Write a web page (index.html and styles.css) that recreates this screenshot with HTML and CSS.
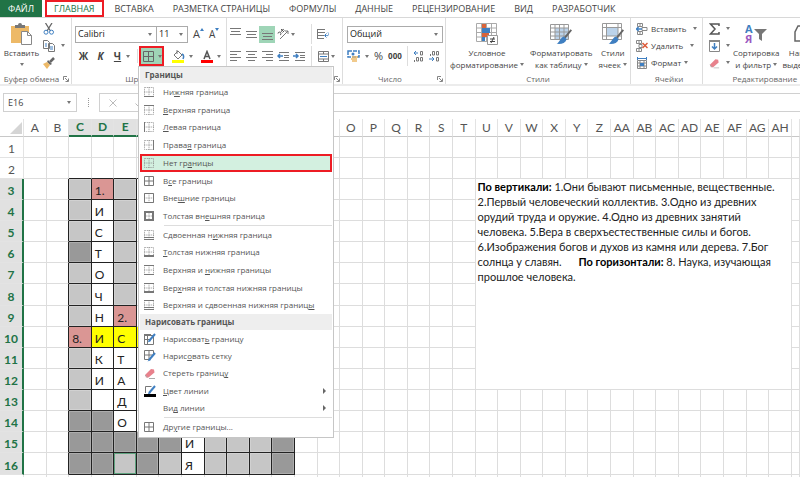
FILE: index.html
```
<!DOCTYPE html>
<html lang="ru">
<head>
<meta charset="utf-8">
<title>Кроссворд</title>
<link rel="stylesheet" href="styles.css">
</head>
<body>
<svg class="defs" aria-hidden="true">
 <symbol id="dots" viewBox="0 0 10 10">
  <path d="M.5 .5h9v9h-9zM5 0v10M0 5h10" fill="none" stroke="#8a8a8a" stroke-dasharray="1.4 .8" stroke-width=".7"/>
 </symbol>
 <symbol id="launch" viewBox="0 0 6 6">
  <path d="M.5 4V.5H4M2 2l3 3M5.500 2.500v3h-3" fill="none" stroke="#777" stroke-width=".9"/>
 </symbol>
 <symbol id="brush" viewBox="0 0 12 12">
  <path d="M11.500 1L6.500 7" stroke="#666" stroke-width="1.500"/>
  <path d="M6 6l2 2c-1 3-4 4-7.500 3.500C3 10 3 7 6 6z" fill="#3f7fc1"/>
 </symbol>
 <symbol id="eraser" viewBox="0 0 12 12">
  <path d="M1 8l6-6 3 .5.500 3-6 5H2z" fill="#e8818c" stroke="none"/>
  <path d="M1 8l2.500 2.500M5 11.500h6" stroke="#aaa" fill="none"/>
 </symbol>
 <symbol id="pen" viewBox="0 0 12 12">
  <path d="M11 1L5 8" stroke="#3f7fc1" stroke-width="2"/>
  <path d="M5.500 6.500L3.500 9.500 7 8z" fill="#3f7fc1" stroke="none"/>
 </symbol>
</svg>

<nav class="tabs">
 <a class="file" href="#">ФАЙЛ</a>
 <a class="current" href="#">ГЛАВНАЯ</a>
 <a href="#">ВСТАВКА</a>
 <a href="#">РАЗМЕТКА СТРАНИЦЫ</a>
 <a href="#">ФОРМУЛЫ</a>
 <a href="#">ДАННЫЕ</a>
 <a href="#">РЕЦЕНЗИРОВАНИЕ</a>
 <a href="#">ВИД</a>
 <a href="#">РАЗРАБОТЧИК</a>
</nav>

<div class="ribbon">
 <section class="group clipboard">
  <div class="tools">
   <button class="big">
    <svg width="22" height="22" viewBox="0 0 22 22"><path d="M0 3h18v17H0z" fill="#edb967"/><path d="M4 5V2h3a2 2 0 0 1 4 0h3v3z" fill="#777"/><path d="M10.500 8.500h6l4 4v9h-10z" fill="#fff" stroke="#888"/><path d="M16.500 8.500v4h4" fill="none" stroke="#888"/></svg>
    <span>Вставить</span>
    <i class="arrow"></i>
   </button>
   <div class="stack">
    <button title="Вырезать"><svg width="12" height="12" viewBox="0 0 12 12"><path d="M2.500 0l5 8M9 0L4 8" stroke="#666" stroke-width="1.3"/><circle cx="3" cy="9.200" r="2" fill="none" stroke="#3f7fc1"/><circle cx="8.500" cy="9.200" r="2" fill="none" stroke="#3f7fc1"/></svg></button>
    <button title="Копировать"><svg width="12" height="12" viewBox="0 0 12 12"><path d="M.5.5h4l2 2v6h-6zM5.500 3.500h4l2 2v6h-6z" fill="#fff" stroke="#777"/><path d="M2 4h2M2 6h2M7 7h3M7 9h3" stroke="#3f7fc1"/></svg><i class="arrow"></i></button>
    <button title="Формат по образцу"><svg width="12" height="12" viewBox="0 0 12 12"><path d="M11 1L7 5" stroke="#666" stroke-width="2.500"/><path d="M5 3l4 4-2 1-3-3z" fill="#666"/><path d="M4 5l3 3-3 4-4-5z" fill="#edb967"/></svg></button>
   </div>
  </div>
  <footer><span>Буфер обмена</span><svg class="launch"><use href="#launch"/></svg></footer>
 </section>

 <section class="group font">
  <div class="tools">
   <div class="line">
    <label class="select name"><select aria-label="Шрифт"><option>Calibri</option></select></label>
    <label class="select size"><select aria-label="Размер"><option>11</option></select></label>
    <button class="grow">A<svg width="4" height="3" viewBox="0 0 4 3"><path d="M0 3l2-3 2 3z" fill="#3f7fc1"/></svg></button>
    <button class="shrink">A<svg width="4" height="3" viewBox="0 0 4 3"><path d="M0 0l2 3 2-3z" fill="#3f7fc1"/></svg></button>
   </div>
   <div class="line">
    <button class="letter"><b>Ж</b></button>
    <button class="letter"><b><em>К</em></b></button>
    <button class="letter"><b><u>Ч</u></b></button>
    <i class="arrow"></i>
    <i class="rule"></i>
    <div class="dropdown">
     <button class="borders" title="Границы"><svg width="11" height="11" viewBox="0 0 11 11"><path d="M.5.5h10v10H.500zM5.500 0v11M0 5.500h11" fill="none" stroke="#666"/></svg><i class="arrow"></i></button>
     <div class="menu">
      <h2>Границы</h2>
      <ul class="edges">
       <li><button><svg><use href="#dots"/><path d="M0 9.500h10"/></svg><span>Ни<u>ж</u>няя граница</span></button></li>
       <li><button><svg><use href="#dots"/><path d="M0 .5h10"/></svg><span><u>В</u>ерхняя граница</span></button></li>
       <li><button><svg><use href="#dots"/><path d="M.5 0v10"/></svg><span><u>Л</u>евая граница</span></button></li>
       <li><button><svg><use href="#dots"/><path d="M9.500 0v10"/></svg><span>Права<u>я</u> граница</span></button></li>
       <li><button class="picked"><svg><use href="#dots"/></svg><span>Нет гр<u>а</u>ницы</span></button></li>
       <li><button><svg><path d="M.5.5h9v9h-9zM5 0v10M0 5h10"/></svg><span>В<u>с</u>е границы</span></button></li>
       <li><button><svg><use href="#dots"/><path d="M.5.5h9v9h-9z"/></svg><span>Вне<u>ш</u>ние границы</span></button></li>
       <li><button><svg><use href="#dots"/><path class="thick" d="M1 1h8v8H1z"/></svg><span>Толстая вн<u>е</u>шняя граница</span></button></li>
      </ul>
      <hr>
      <ul class="mixed">
       <li><button><svg><use href="#dots"/><path d="M0 7.500h10M0 9.500h10"/></svg><span>Сдвоенная н<u>и</u>жняя граница</span></button></li>
       <li><button><svg><use href="#dots"/><path class="thick" d="M0 9h10"/></svg><span><u>Т</u>олстая нижняя граница</span></button></li>
       <li><button><svg><use href="#dots"/><path d="M0 .5h10M0 9.500h10"/></svg><span>Верхняя и <u>н</u>ижняя границы</span></button></li>
       <li><button><svg><use href="#dots"/><path d="M0 .5h10"/><path class="thick" d="M0 9h10"/></svg><span>Вер<u>х</u>няя и толстая нижняя границы</span></button></li>
       <li><button><svg><use href="#dots"/><path d="M0 .5h10M0 7.500h10M0 9.500h10"/></svg><span>Верхняя и сдвоенная нижняя границ<u>ы</u></span></button></li>
      </ul>
      <h2>Нарисовать границы</h2>
      <ul class="draw">
       <li><button><svg class="wide" viewBox="0 0 12 12"><path d="M.5 2.500h9v9h-9zM3.500 3v8M0 6.500h6"/><path class="thick" d="M0 2h7"/><use href="#pen"/></svg><span>Нарисоват<u>ь</u> границу</span></button></li>
       <li><button><svg class="wide" viewBox="0 0 12 12"><path d="M.5.5h9v5M.5.500v9h5M5 0v9M0 5h9"/><use href="#pen" y="2"/></svg><span>Нарис<u>о</u>вать сетку</span></button></li>
       <li><button><svg class="wide" viewBox="0 0 12 12"><use href="#eraser"/></svg><span>Стереть границ<u>у</u></span></button></li>
       <li><button><svg class="wide" viewBox="0 0 12 12"><path d="M1.500 8V1.500h6"/><use href="#pen"/><path d="M0 10.500h12" class="ink"/></svg><span><u>Ц</u>вет линии</span><i class="more"></i></button></li>
       <li><button><svg></svg><span>Ви<u>д</u> линии</span><i class="more"></i></button></li>
      </ul>
      <hr>
      <ul class="other">
       <li><button><svg><path d="M.5.5h9v9h-9zM5 0v10M0 5h10"/></svg><span>Др<u>у</u>гие границы...</span></button></li>
      </ul>
     </div>
    </div>
    <button class="fill" title="Цвет заливки"><svg width="13" height="13" viewBox="0 0 13 13"><path d="M2 5l4-4 4 4-4 4z" fill="#fff" stroke="#777"/><path d="M5 0v4" stroke="#777"/><path d="M10 4c2 1 2 3 1 5" fill="none" stroke="#3f7fc1" stroke-width="1.500"/><path d="M0 10h12v3H0z" fill="#ff0"/></svg></button>
    <i class="arrow"></i>
    <button class="fill" title="Цвет текста"><svg width="12" height="13" viewBox="0 0 12 13"><path d="M3 9l3-7.500L9 9M4 6.500h4" fill="none" stroke="#555" stroke-width="1.500"/><path d="M0 10h12v3H0z" fill="red"/></svg></button>
    <i class="arrow"></i>
   </div>
  </div>
  <footer><span>Шрифт</span></footer>
 </section>

 <section class="group align">
  <div class="tools">
   <div class="line">
    <button><svg width="11" height="12" viewBox="0 0 11 12"><path d="M0 .5h11M1 3.500h9M0 6.500h11"/></svg></button>
    <button><svg width="11" height="12" viewBox="0 0 11 12"><path d="M0 3.500h11M1 6.500h9M0 9.500h11"/></svg></button>
    <button class="on"><svg width="11" height="12" viewBox="0 0 11 12"><path d="M0 5.500h11M1 8.500h9M0 11.500h11"/></svg></button>
    <button><svg width="12" height="12" viewBox="0 0 12 12"><path d="M3 11L11 3M11 6V3H8"/><path d="M1 5.500a1.500 1.500 0 1 1 2 1.500M4 1l3 3M5.500 4.500a1.500 1.500 0 1 1 2-2" stroke="#555"/></svg></button>
    <i class="arrow"></i>
    <i class="rule"></i>
    <button><svg width="12" height="12" viewBox="0 0 12 12"><path d="M0 1.500h8M0 4.500h8M0 7.500h7M0 10.500h7M.5 1v10"/><path d="M8 7.500h1.500a1.500 1.500 0 0 0 1.500-3M9.500 5.500l-2 2 2 2" stroke="#3f7fc1"/></svg></button>
   </div>
   <div class="line">
    <button><svg width="11" height="10" viewBox="0 0 11 10"><path d="M0 .5h11M0 3.500h7M0 6.500h11M0 9.500h7"/></svg></button>
    <button><svg width="11" height="10" viewBox="0 0 11 10"><path d="M0 .5h11M2 3.500h7M0 6.500h11M2 9.500h7"/></svg></button>
    <button><svg width="11" height="10" viewBox="0 0 11 10"><path d="M0 .5h11M4 3.500h7M0 6.500h11M4 9.500h7"/></svg></button>
    <button><svg width="12" height="10" viewBox="0 0 12 10"><path d="M2 1.500h10M7 4.500h5M7 6.500h5M2 9.500h10"/><path d="M6 5H1M3 3L1 5l2 2" stroke="#3f7fc1" stroke-width="1.500"/></svg></button>
    <button><svg width="12" height="10" viewBox="0 0 12 10"><path d="M2 1.500h10M7 4.500h5M7 6.500h5M2 9.500h10"/><path d="M0 5h5M3 3l2 2-2 2" stroke="#3f7fc1" stroke-width="1.500"/></svg></button>
    <i class="rule"></i>
    <button><svg width="11" height="11" viewBox="0 0 11 11"><path d="M.5.5h10v10H.5zM.5 3h10M.5 8h10M5.500 0v3M5.500 8v3"/><path d="M2 5.500h7" stroke="#3f7fc1"/></svg></button>
    <i class="arrow"></i>
   </div>
  </div>
  <footer><span></span><svg class="launch"><use href="#launch"/></svg></footer>
 </section>

 <section class="group number">
  <div class="tools">
   <div class="line">
    <label class="select format"><select aria-label="Числовой формат"><option>Общий</option></select></label>
   </div>
   <div class="line">
    <button><svg width="13" height="12" viewBox="0 0 13 12"><path d="M1 1h11v6H1z" stroke="#3f7fc1" stroke-width="1.500" stroke-dasharray="4 1"/><circle cx="6" cy="4" r="1.500" fill="#3f7fc1" stroke="none"/><path d="M5 7h6M4 9h6M5 11h5" stroke="#edb967" stroke-width="1.500"/></svg></button>
    <i class="arrow"></i>
    <button class="sign">%</button>
    <button class="zeros">000</button>
    <i class="rule"></i>
    <button class="digits"><svg width="11" height="12" viewBox="0 0 11 12"><path d="M5 3H1M3 1L1 3l2 2" stroke="#3f7fc1"/><path d="M7.500 1.500h2v3.500h-2zM3.500 7.500h2V11h-2zM7.500 7.500h2V11h-2zM1.500 10v2"/></svg></button>
    <button class="digits"><svg width="11" height="12" viewBox="0 0 11 12"><path d="M0 9h5M3 7l2 2-2 2" stroke="#3f7fc1"/><path d="M3.500 1.500h2V5h-2zM7.500 1.500h2V5h-2zM7.500 7.500h2V11h-2zM1.500 4v2"/></svg></button>
   </div>
  </div>
  <footer><span>Число</span><svg class="launch"><use href="#launch"/></svg></footer>
 </section>

 <section class="group styles">
  <div class="tools">
   <button class="big">
    <svg width="22" height="22" viewBox="0 0 22 22"><path d="M.5.5h20v18H.5zM.5 5h20M.5 9.500h20M.5 14h20M5.500 0v18M10.500 0v18M15.500 0v18" fill="#fff" stroke="#aaa"/><path d="M6 1h4v4H6zM6 10h7v4H6z" fill="#d9643a"/><path d="M6 5h8v5H6zM6 14h3v4H6z" fill="#3f7fc1"/><path d="M11.500 12.500h10v9h-10z" fill="#fff" stroke="#999"/><path d="M14 16h5M14 18.500h5M18 14l-3 6" stroke="#444"/></svg>
    <span>Условное</span>
    <span>форматирование <i class="arrow"></i></span>
   </button>
   <button class="big">
    <svg width="22" height="22" viewBox="0 0 22 22"><path d="M5 5h14v11H5z" fill="#bcd3ea"/><path d="M.5 1.500h18v15H.5zM.5 5h18M.5 9h18M.5 13h18M5 2v14M9.500 2v14M14 2v14" fill="none" stroke="#999"/><use href="#brush" x="6" y="5" width="16" height="17"/></svg>
    <span>Форматировать</span>
    <span>как таблицу <i class="arrow"></i></span>
   </button>
   <button class="big">
    <svg width="22" height="22" viewBox="0 0 22 22"><path d="M5 5h11v8H5z" fill="#bcd3ea"/><path d="M.5.5h19v16H.5zM.5 4.500h19M.5 13h19M4.500 0v16M16 0v16" fill="none" stroke="#999"/><use href="#brush" x="6" y="5" width="16" height="17"/></svg>
    <span>Стили</span>
    <span>ячеек <i class="arrow"></i></span>
   </button>
  </div>
  <footer><span>Стили</span></footer>
 </section>

 <section class="group cells">
  <div class="tools">
   <button><svg width="12" height="12" viewBox="0 0 12 12"><path d="M1.500.5h5v3h-5zM1.500 8.500h5v3h-5zM4 0v3M4 8v4M6 4.500h5v3H6z" fill="none" stroke="#888"/><path d="M0 6h6M2.500 4L.5 6l2 2" fill="none" stroke="#3f7fc1" stroke-width="1.500"/></svg><span class="insert">Вставить</span><i class="arrow"></i></button>
   <button><svg width="12" height="12" viewBox="0 0 12 12"><path d="M.5.5h5v3h-5zM.5 8.500h5v3h-5zM3 0v3M3 8v4M3 4.500h3v3H3z" fill="none" stroke="#888"/><path d="M6.500 3l5 5M11.500 3l-5 5" stroke="#dc5b3a" stroke-width="1.500"/></svg><span class="insert">Удалить</span><i class="arrow"></i></button>
   <button><svg width="12" height="12" viewBox="0 0 12 12"><path d="M1.500 3.500h9v8h-9zM4 3v8M8 3v8M1 6h10M1 9h10" fill="none" stroke="#888"/><path d="M4 6h4v3H4z" fill="#3f7fc1"/><path d="M1.500 0v3M10.500 0v3M2 1.500h8" stroke="#3f7fc1"/></svg><span>Формат</span><i class="arrow"></i></button>
  </div>
  <footer><span>Ячейки</span></footer>
 </section>

 <section class="group editing">
  <div class="tools">
   <div class="stack">
    <button title="Сумма"><svg width="11" height="12" viewBox="0 0 11 12"><path d="M10 3V1H1.500l4.500 5-4.500 5H10V9" fill="none" stroke="#555" stroke-width="1.500"/></svg><i class="arrow"></i></button>
    <button title="Заполнить"><svg width="11" height="12" viewBox="0 0 11 12"><path d="M.5.5h10v11H.5z" fill="#fff" stroke="#888"/><path d="M0 1h11" stroke="#888" stroke-width="2"/><path d="M5.500 3v6M3 6.500L5.500 9 8 6.500" fill="none" stroke="#3f7fc1" stroke-width="1.500"/></svg><i class="arrow"></i></button>
    <button title="Очистить"><svg width="11" height="12" viewBox="0 0 12 12"><use href="#eraser"/></svg><i class="arrow"></i></button>
   </div>
   <button class="big">
    <svg width="22" height="22" viewBox="0 0 22 22"><text x="0" y="10" class="sort-a">А</text><text x="0" y="20" class="sort-z">Я</text><path d="M9 6h13l-5 5v7l-3-2v-5z" fill="#777"/></svg>
    <span>Сортировка</span>
    <span>и фильтр <i class="arrow"></i></span>
   </button>
   <button class="big">
    <svg width="22" height="22" viewBox="0 0 22 22"><path d="M1 18V9l3-6h3v15zM12 18V3h3l4 6v9z" fill="none" stroke="#666" stroke-width="1.500"/></svg>
    <span>Найти и</span>
    <span>выделить <i class="arrow"></i></span>
   </button>
  </div>
  <footer><span>Редактирование</span></footer>
 </section>
</div>

<div class="formula">
 <div class="namebox"><input aria-label="Имя" value="E16"><i class="arrow"></i></div>
 <i class="grip"></i>
 <div class="entry">
  <button title="Отмена"><svg width="8" height="8" viewBox="0 0 8 8"><path d="M.5.5l7 7M7.500.5l-7 7"/></svg></button>
  <button title="Ввод"><svg width="9" height="8" viewBox="0 0 9 8"><path d="M.5 4.500l3 3 5-7"/></svg></button>
  <input aria-label="Строка формул">
 </div>
</div>

<table class="sheet" id="sheet"></table>
<script src="script.js"></script>
</body>
</html>
```
FILE: styles.css
```
* {
 box-sizing: border-box;
}
body {
 margin: 0;
 overflow: hidden;
 background: #fff;
 color: #444;
 font-family: "Open Sans", "Noto Sans", sans-serif;
 font-size: 8px;
 line-height: 12px;
}
button, select, input {
 font: inherit;
 color: inherit;
 background: none;
 border: 0;
 padding: 0;
 margin: 0;
}
button {
 display: flex;
 align-items: center;
 white-space: nowrap;
}
svg {
 display: block;
 flex: none;
}
.defs {
 display: none;
}
.arrow {
 flex: none;
 display: inline-block;
 border: 2px solid transparent;
 border-top: 3px solid #777;
 border-bottom: 0;
 vertical-align: 2px;
}
.rule {
 align-self: stretch;
 width: 1px;
 background: #ddd;
}

/* tabs */
.tabs {
 display: flex;
 height: 18px;
 border-bottom: 1px solid #d8d8d8;
 font-size: 9px;
}
.tabs a {
 padding: 0 9px 0 10px;
 color: #444;
 line-height: 17px;
 text-decoration: none;
 white-space: nowrap;
}
.tabs .file {
 width: 42px;
 padding: 0 8px;
 background: #217346;
 color: #fff;
}
.tabs .current {
 margin: 0 1px 0 3px;
 padding: 0 7px;
 border: 2px solid #ed1c24;
 color: #217346;
 line-height: 13px;
}

/* ribbon */
.ribbon {
 display: flex;
 height: 68px;
 border-bottom: 2px solid #ececec;
}
.group {
 flex: none;
 display: flex;
 flex-direction: column;
 padding-top: 2px;
 border-right: 1px solid #ddd;
}
.tools {
 flex: 1;
 display: flex;
}
.group footer {
 display: flex;
 height: 13px;
 color: #666;
 line-height: 15px;
 white-space: nowrap;
}
.group footer span {
 flex: 1;
 text-align: center;
}
.launch {
 width: 6px;
 height: 6px;
 margin: 5px 2px 0 0;
}
.line {
 display: flex;
 align-items: center;
 height: 20px;
}
.big {
 flex-direction: column;
 padding-top: 3px;
}
.big svg {
 margin-bottom: 2px;
}
.stack {
 display: flex;
 flex-direction: column;
}
.stack button {
 gap: 6px;
 height: 17px;
}
.select {
 position: relative;
 height: 17px;
 border: 1px solid #ababab;
 font-size: 9px;
}
.select select {
 display: block;
 width: 100%;
 height: 100%;
 padding-left: 2px;
 appearance: none;
 color: #222;
}
.select::after {
 content: "";
 position: absolute;
 right: 4px;
 top: 6px;
 border: 2px solid transparent;
 border-top: 3px solid #777;
 border-bottom: 0;
 pointer-events: none;
}
.clipboard {
 width: 72px;
}
.clipboard .big {
 width: 43px;
}
.clipboard .big .arrow {
 margin-top: 4px;
}
.font {
 width: 155px;
}
.font .tools, .align .tools, .number .tools, .cells .tools {
 flex-direction: column;
}
.font .tools, .align .tools, .number .tools {
 padding-top: 4px;
 gap: 2px;
}
.font .line {
 padding-left: 3px;
}
.font footer {
 padding-right: 20px;
}
.name {
 width: 82px;
}
.size {
 width: 31px;
 border-left: 0;
}
.grow, .shrink {
 align-items: flex-start;
 font-size: 11px;
 margin-left: 5px;
}
.shrink {
 font-size: 10px;
}
.letter {
 justify-content: center;
 width: 17px;
 font-size: 10px;
}
.font .line .rule {
 margin: 3px 1px 3px 7px;
}
.borders {
 gap: 4px;
 width: 25px;
 height: 20px;
 padding-left: 2px;
 border: 2px solid #ed1c24;
 background: #9fd5b7;
}
.fill {
 margin: 0 4px 0 8px;
}
.align {
 width: 116px;
}
.align svg {
 fill: none;
 stroke: #777;
}
.align button {
 justify-content: center;
 width: 16px;
 height: 17px;
}
.align .on {
 background: #9fd5b7;
}
.align .rule {
 margin: 0 3px 0 4px;
}
.align .arrow + .rule {
 margin-left: 16px;
}
.number {
 width: 103px;
}
.number .line {
 gap: 5px;
 padding-left: 4px;
}
.number svg {
 fill: none;
 stroke: #777;
}
.format {
 width: 96px;
}
.sign {
 font-size: 11px;
}
.zeros {
 font-weight: bold;
}
.styles {
 width: 185px;
}
.styles .tools {
 gap: 6px;
 padding-left: 4px;
}
.cells {
 width: 72px;
 padding-left: 5px;
}
.cells button {
 gap: 3px;
 height: 17px;
}
.cells .insert {
 margin-right: 4px;
}
.editing {
 border: 0;
}
.editing .tools {
 gap: 3px;
 padding-left: 6px;
}
.sort-a, .sort-z {
 font-size: 11px;
 font-weight: bold;
 fill: #3f7fc1;
}
.sort-z {
 fill: #9b59c0;
}

/* borders menu */
.dropdown {
 position: relative;
}
.menu {
 position: absolute;
 z-index: 2;
 top: 100%;
 left: -1px;
 width: 196px;
 padding: 0 1px 1px;
 border: 1px solid #c6c6c6;
 background: #fff;
 color: #555;
}
.menu h2 {
 margin: 0;
 padding: 0 5px;
 background: #eee;
 font-size: 8px;
 line-height: 16px;
}
.menu ul {
 display: grid;
 grid-auto-rows: 1fr;
 margin: 0;
 padding: 0;
 list-style: none;
}
.menu .edges {
 min-height: 142px;
}
.menu .mixed {
 min-height: 88px;
}
.menu .draw {
 min-height: 87px;
}
.menu .other {
 min-height: 18px;
}
.menu li {
 display: flex;
}
.menu li button {
 flex: 1;
 padding-left: 4px;
}
.menu li svg {
 width: 10px;
 height: 10px;
 margin-right: 9px;
 fill: none;
 stroke: #777;
}
.menu li .wide {
 width: 12px;
 height: 12px;
 margin-right: 7px;
}
.menu .thick {
 stroke-width: 2;
}
.menu .ink {
 stroke: #000;
 stroke-width: 3;
}
.menu .picked {
 padding-left: 2px;
 border: 2px solid #ed1c24;
 background: #d3f0e0;
}
.menu hr {
 height: 1px;
 margin: 0 0 0 24px;
 border: 0;
 background: #ddd;
}
.more {
 margin: 0 6px 0 auto;
 border: 3px solid transparent;
 border-left-color: #666;
 border-right: 0;
}

/* formula bar */
.formula {
 display: flex;
 height: 33px;
 padding: 7px 0 7px 3px;
}
.namebox {
 display: flex;
 align-items: center;
 width: 74px;
 border: 1px solid #d0d0d0;
 padding: 0 5px 0 4px;
}
.namebox input {
 flex: 1;
 min-width: 0;
 font-size: 9px;
}
.grip {
 width: 1px;
 margin: 5px 10px 5px 11px;
 border-left: 1px dotted #999;
}
.entry {
 flex: 1;
 display: flex;
 align-items: center;
 gap: 18px;
 padding-left: 9px;
 border: 1px solid #d0d0d0;
 border-right: 0;
}
.entry svg {
 fill: none;
 stroke: #bbb;
}
.entry input {
 flex: 1;
}

/* sheet */
.sheet {
 width: 100%;
 table-layout: fixed;
 border-collapse: separate;
 border-spacing: 0;
 color: #222;
 font-family: Lato, "Open Sans", sans-serif;
 font-size: 12px;
 line-height: 16px;
}
.sheet .corner {
 width: 24px;
}
.sheet .rest {
 width: 8px;
}
.sheet th {
 padding: 0;
 border-right: 1px solid #e3e3e3;
 color: #555;
 font-weight: normal;
 white-space: nowrap;
}
.sheet thead th {
 height: 18px;
 border-bottom: 1px solid #c8c8c8;
}
.sheet thead th:first-child svg {
 margin-left: 10px;
}
.sheet tbody th {
 padding-top: 4px;
 border-bottom: 1px solid #e3e3e3;
}
.sheet .sel {
 background: #e1e1e1;
 color: #217346;
 font-weight: bold;
}
.sheet thead .sel {
 border-bottom: 2px solid #217346;
}
.sheet tbody .sel {
 border-right: 2px solid #217346;
}
.sheet td {
 height: 21px;
 padding: 4px 0 0 3px;
 border-right: 1px solid #ddd;
 border-bottom: 1px solid #ddd;
}
.sheet tr:nth-child(8n) td {
 height: 22px;
}
.sheet .box {
 border-color: #222;
}
.sheet .above {
 border-bottom-color: #222;
}
.sheet .before {
 border-right-color: #222;
}
.sheet .light {
 background: #c6c6c6;
}
.sheet .dark {
 background: #999;
}
.sheet .light, .sheet .dark {
 box-shadow: inset 0 0 0 1px rgba(255, 255, 255, .2);
}
.sheet .pink {
 background: #da9694;
}
.sheet .yellow {
 background: #ff0;
}
.sheet .active {
 box-shadow: inset 0 0 0 1px #5fa37f;
}
.sheet .clues {
 padding: 0 2px;
 font-size: 11px;
 line-height: 15px;
 vertical-align: top;
 white-space: pre-wrap;
}
.sheet .clues b {
 color: #000;
}
```
FILE: script.js
```
// one string per row, columns C..L: l light, d dark, p pink, y yellow, w white, . outside
var fills = {
 3: "lpl.......", 4: "lwl.......", 5: "lwl.......", 6: "dwl.......",
 7: "lwl.......", 8: "lwl.......", 9: "lwp.......", 10: "pyyyyyyyyy",
 11: "lww.......", 12: "lww.......", 13: "lww.......", 14: "ddw.......",
 15: "dddddwllld", 16: "ddldlwllld"
}
var names = { l: "light", d: "dark", p: "pink", y: "yellow", w: "white" }
var text = {
 D3: "1.", D4: "И", D5: "С", D6: "Т", D7: "О", D8: "Ч", D9: "Н", D10: "И", D11: "К", D12: "И",
 E9: "2.", E10: "С", E11: "Т", E12: "А", E13: "Д", E14: "О",
 C10: "8.", H15: "И", H16: "Я"
}
var clues = "<b>По вертикали:</b> 1.Они бывают письменные, вещественные. 2.Первый человеческий коллектив. " +
 "3.Одно из древних орудий труда и оружие. 4.Одно из древних занятий человека. " +
 "5.Вера в сверхъестественные силы и богов. 6.Изображения богов и духов из камня или дерева. " +
 "7.Бог солнца у славян.      <b>По горизонтали:</b> 8. Наука, изучающая прошлое человека."

function colname(i) {
 return i < 26 ? String.fromCharCode(65 + i) : "A" + String.fromCharCode(39 + i)
}

var html = '<colgroup><col class="corner"><col span="34"><col class="rest"></colgroup><thead><tr>'
html += '<th><svg width="12" height="12" viewBox="0 0 12 12"><path d="M12 0v12H0z" fill="#d5d5d5"/></svg></th>'
for (let i = 0; i < 34; i++) {
 html += '<th' + (i > 1 && i < 12 ? ' class="sel"' : '') + '>' + colname(i) + '</th>'
}
html += '<th></th></tr></thead><tbody>'
for (let r = 1; r < 18; r++) {
 html += '<tr><th' + (r > 2 && r < 17 ? ' class="sel"' : '') + '>' + (r < 17 ? r : '') + '</th>'
 for (let i = 0; i < 35; i++) {
  if (r > 2 && r < 13 && i > 19 && i < 34) {
   if (r == 3 && i == 20) html += '<td class="clues" colspan="14" rowspan="10">' + clues + '</td>'
   continue
  }
  let fill = fills[r] ? names[fills[r][i - 2]] : ""
  let cls = fill ? "box " + fill : ""
  if (r == 2 && i > 1 && i < 12) cls = "above"
  if (r > 2 && r < 17 && i == 1) cls = "before"
  if (r == 16 && i == 4) cls += " active"
  html += '<td' + (cls ? ' class="' + cls + '"' : '') + '>' + (text[colname(i) + r] || "") + '</td>'
 }
 html += '</tr>'
}
document.getElementById("sheet").innerHTML = html + '</tbody>'
```
